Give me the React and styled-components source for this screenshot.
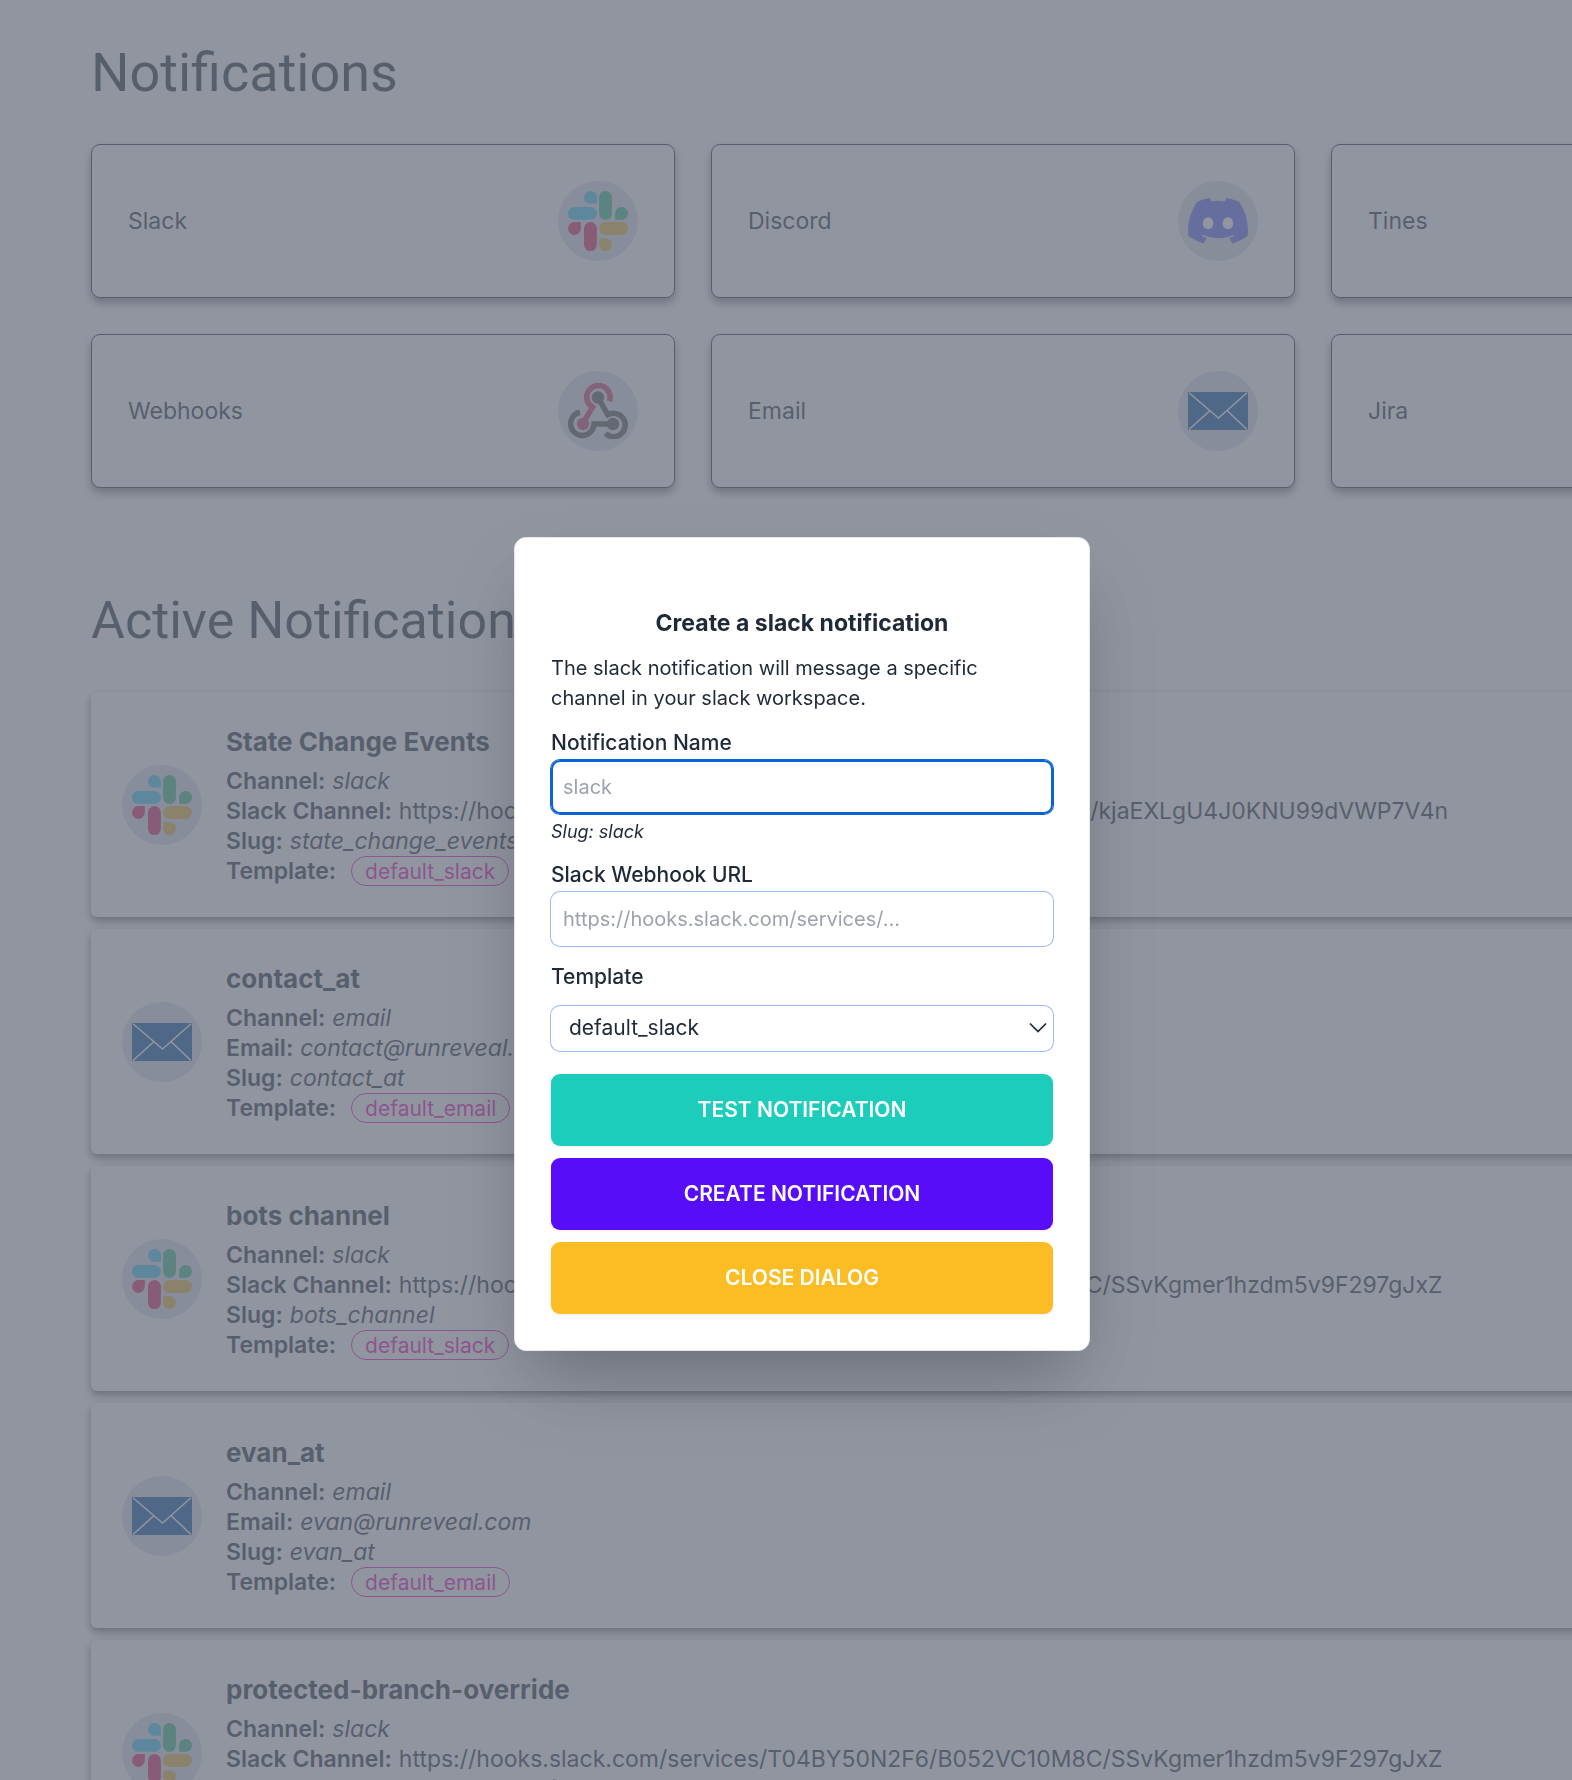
import React from "react"
import styled, { createGlobalStyle } from "styled-components"

const GlobalStyle = createGlobalStyle`
  *,
  *::before,
  *::after {
    box-sizing: border-box;
  }
  body {
    margin: 0;
    background: #ffffff;
    color: #1f2937;
    font-family: Inter, "Liberation Sans", sans-serif;
    font-size: 23px;
    line-height: 30px;
    overflow: hidden;
  }
  h1,
  h2,
  h3,
  p {
    margin: 0;
  }
`

const Page = styled.main`
  height: 100vh;
  overflow: hidden;
  padding: 43px 0 0 91px;
`

const PageTitle = styled.h1`
  font-family: Roboto, sans-serif;
  font-size: ${props => (props.large ? "54px" : "52px")};
  font-weight: 400;
  line-height: 60px;
  margin-bottom: 41px;
`

const ChannelGrid = styled.div`
  display: grid;
  grid-template-columns: repeat(3, minmax(584px, 1fr));
  gap: 36px;
  margin-bottom: 103px;
`

const ChannelCard = styled.button`
  display: flex;
  align-items: center;
  justify-content: space-between;
  padding: 36px;
  border: 1px solid #1f2937;
  border-radius: 9px;
  background: #ffffff;
  color: inherit;
  font: inherit;
  text-align: left;
  box-shadow: 0 5px 8px rgba(0, 0, 0, 0.5);
`

const IconCircle = styled.span`
  display: flex;
  align-items: center;
  justify-content: center;
  flex: none;
  width: 80px;
  height: 80px;
  border-radius: 50%;
  background: ${props => props.shade || "#dddfea"};
`

const NotificationList = styled.div`
  display: flex;
  flex-direction: column;
  gap: 12px;
  min-width: 1822px;
`

const NotificationCard = styled.article`
  display: flex;
  align-items: center;
  gap: 24px;
  padding: 32px 31px 31px;
  border-radius: 6px;
  background: #ffffff;
  box-shadow: 0 4px 9px rgba(0, 0, 0, 0.6);
`

const NotificationName = styled.h3`
  font-size: 26px;
  font-weight: 700;
  line-height: 36px;
  margin-bottom: 6px;
`

const Detail = styled.div`
  display: flex;
  align-items: center;
  gap: 7px;
  height: 30px;
  white-space: nowrap;
`

const DetailLabel = styled.span`
  font-weight: 600;
`

const Badge = styled.span`
  height: 30px;
  margin-left: 8px;
  padding: 0 13px;
  border: 1px solid #f000b8;
  border-radius: 15px;
  color: #f000b8;
  font-size: 21px;
  line-height: 29px;
`

const Overlay = styled.div`
  position: fixed;
  inset: 0;
  display: flex;
  align-items: center;
  justify-content: center;
  padding: 107px 0 0 32px;
  background: rgba(107, 114, 128, 0.75);
`

const Dialog = styled.form`
  width: 100%;
  max-width: 576px;
  padding: 67px 36px 36px;
  border: 1px solid #e5e7eb;
  border-radius: 12px;
  background: #ffffff;
  font-size: 20px;
  box-shadow: 0 36px 72px -16px rgba(0, 0, 0, 0.28);
`

const DialogTitle = styled.h2`
  font-size: 23px;
  font-weight: 700;
  line-height: 36px;
  margin-bottom: 12px;
  text-align: center;
`

const Field = styled.div`
  display: flex;
  flex-direction: column;
  margin-top: 16px;
  p + & {
    margin-top: 15px;
  }
`

const Label = styled.label`
  font-size: 21px;
  font-weight: 500;
  line-height: 30px;
  margin-bottom: ${props => (props.loose ? "14px" : "2px")};
`

const controlRing = `
  border: 0;
  border-radius: 9px;
  background: #ffffff;
  color: #1f2937;
  font: inherit;
  box-shadow: 0 0 0 1px #98bbfb;
  outline: 0;
`

const TextInput = styled.input`
  ${controlRing}
  width: 100%;
  height: 54px;
  padding: 0 12px;
  &::placeholder {
    color: #9ca3af;
    opacity: 1;
  }
  &:focus {
    box-shadow: 0 0 0 1px #0b62d6, inset 0 0 0 2px #0b62d6;
    caret-color: transparent;
  }
`

const Hint = styled.em`
  font-size: 18px;
  line-height: 24px;
  margin-top: 6px;
`

const SelectWrapper = styled.div`
  display: grid;
  align-items: center;
  svg {
    grid-area: 1 / 1;
    justify-self: end;
    margin-right: 6px;
    pointer-events: none;
  }
`

const Select = styled.select`
  ${controlRing}
  grid-area: 1 / 1;
  width: 100%;
  height: 45px;
  padding: 0 36px 0 18px;
  font-size: 21px;
  appearance: none;
`

const Actions = styled.div`
  display: flex;
  flex-direction: column;
  gap: 12px;
  margin-top: 23px;
`

const ActionButton = styled.button`
  height: 72px;
  border: 0;
  border-radius: 9px;
  background: ${props => props.color};
  color: #ffffff;
  font: inherit;
  font-size: 21px;
  font-weight: 600;
  text-transform: uppercase;
  box-shadow: 0 1px 3px rgba(0, 0, 0, 0.08);
`

const SlackIcon = () => (
  <svg width="60" height="60" viewBox="0 0 60 60" aria-hidden="true">
    <g fill="#36c5f0">
      <path d="M22.5 0a6.4 6.4 0 0 0 0 12.8h6.4V6.4A6.4 6.4 0 0 0 22.5 0z" />
      <rect x="0" y="16" width="28.9" height="12.8" rx="6.4" />
    </g>
    <g fill="#2eb67d">
      <rect x="31.1" y="0" width="12.8" height="28.8" rx="6.4" />
      <path d="M60 22.4a6.4 6.4 0 0 0-12.8 0v6.4h6.4a6.4 6.4 0 0 0 6.4-6.4z" />
    </g>
    <g fill="#ecb22e">
      <rect x="31.1" y="31.1" width="28.9" height="12.8" rx="6.4" />
      <path d="M37.5 60a6.4 6.4 0 0 0 0-12.8h-6.4v6.4a6.4 6.4 0 0 0 6.4 6.4z" />
    </g>
    <g fill="#e01e5a">
      <rect x="16" y="31.1" width="12.9" height="28.9" rx="6.4" />
      <path d="M0 37.5a6.4 6.4 0 0 0 12.8 0v-6.4H6.4A6.4 6.4 0 0 0 0 37.5z" />
    </g>
  </svg>
)

const DiscordIcon = () => (
  <svg width="60" height="46" viewBox="0 0 60 46" aria-hidden="true">
    <path
      fill="#5865f2"
      d="M50.8 3.8A49.5 49.5 0 0 0 38.6 0a.2.2 0 0 0-.2.1c-.5.9-1.1 2.2-1.5 3.1a45.7 45.7 0 0 0-13.7 0C22.8 2.3 22.2 1 21.6.1a.2.2 0 0 0-.2-.1A49.4 49.4 0 0 0 9.2 3.8C1.4 15.3-.7 26.6.3 37.7c0 .1 0 .1.1.2a49.8 49.8 0 0 0 15 7.5c.1 0 .2 0 .2-.1 1.2-1.6 2.2-3.2 3.1-5 0-.1 0-.2-.1-.3a32.8 32.8 0 0 1-4.7-2.2c-.1-.1-.1-.3 0-.4l.9-.7c11 4.600 21.500 4.600 30.400 0l.9.7c.2.1.1.3 0 .4-1.5.9-3 1.6-4.7 2.2-.1.1-.2.2-.1.3.9 1.8 1.9 3.4 3.1 5 0 .1.1.1.2.1a49.600 49.600 0 0 0 15-7.5c.1-.1.1-.1.1-.2 1.200-12.900-2.100-24.100-8.900-33.900z"
    />
    <ellipse cx="20.1" cy="25.2" rx="5.3" ry="6" fill="#ffffff" />
    <ellipse cx="39.9" cy="25.2" rx="5.3" ry="6" fill="#ffffff" />
  </svg>
)

const WebhookIcon = () => (
  <svg width="60" height="56" viewBox="0 0 60 56" fill="none" aria-hidden="true">
    <g strokeWidth="5.5">
      <path stroke="#c73a63" d="M41.4 18.2A11.7 11.7 0 1 0 24.5 24.2L15 40" />
      <path stroke="#4b4b4b" d="M11.9 29.3A11.7 11.7 0 1 0 26 41H45" />
      <path stroke="#4b4b4b" d="M30 14.5L39.8 31.8A11.7 11.7 0 1 1 37.5 50.5" />
    </g>
    <circle cx="30" cy="14.5" r="6.2" fill="#4b4b4b" />
    <circle cx="15" cy="41" r="6.2" fill="#c73a63" />
    <circle cx="45" cy="41" r="6.2" fill="#4b4b4b" />
  </svg>
)

const EmailIcon = () => (
  <svg width="60" height="38" viewBox="0 0 60 38" aria-hidden="true">
    <path fill="#004ea0" d="M0 0h60v38H0z" />
    <path
      fill="none"
      stroke="#ffffff"
      strokeWidth="1.5"
      d="M1 .8L30.5 26 59 .8M1 37.5L21.5 19M59 37.5L39.5 19"
    />
  </svg>
)

const icons = {
  slack: SlackIcon,
  discord: DiscordIcon,
  webhooks: WebhookIcon,
  email: EmailIcon,
}

const channels = [
  { name: "Slack", icon: "slack" },
  { name: "Discord", icon: "discord", shade: "#d9dde3" },
  { name: "Tines" },
  { name: "Webhooks", icon: "webhooks" },
  { name: "Email", icon: "email" },
  { name: "Jira" },
]

const hooksUrl = "https://hooks.slack.com/services/T04BY50N2F6"

const notifications = [
  {
    name: "State Change Events",
    channel: "slack",
    target: `${hooksUrl}/B051VC10J8C/kjaEXLgU4J0KNU99dVWP7V4n`,
    slug: "state_change_events",
  },
  {
    name: "contact_at",
    channel: "email",
    target: "contact@runreveal.com",
    slug: "contact_at",
  },
  {
    name: "bots channel",
    channel: "slack",
    target: `${hooksUrl}/B052VC10M8C/SSvKgmer1hzdm5v9F297gJxZ`,
    slug: "bots_channel",
  },
  {
    name: "evan_at",
    channel: "email",
    target: "evan@runreveal.com",
    slug: "evan_at",
  },
  {
    name: "protected-branch-override",
    channel: "slack",
    target: `${hooksUrl}/B052VC10M8C/SSvKgmer1hzdm5v9F297gJxZ`,
    slug: "protected-branch-override",
  },
]

const ChannelIcon = ({ icon, shade }) => {
  const Icon = icons[icon]
  return <IconCircle shade={shade}>{Icon && <Icon />}</IconCircle>
}

const Notification = ({ name, channel, target, slug }) => (
  <NotificationCard>
    <ChannelIcon icon={channel} />
    <div>
      <NotificationName>{name}</NotificationName>
      <Detail>
        <DetailLabel>Channel:</DetailLabel>
        <em>{channel}</em>
      </Detail>
      <Detail>
        <DetailLabel>
          {channel === "slack" ? "Slack Channel:" : "Email:"}
        </DetailLabel>
        {channel === "slack" ? <span>{target}</span> : <em>{target}</em>}
      </Detail>
      <Detail>
        <DetailLabel>Slug:</DetailLabel>
        <em>{slug}</em>
      </Detail>
      <Detail>
        <DetailLabel>Template:</DetailLabel>
        <Badge>default_{channel}</Badge>
      </Detail>
    </div>
  </NotificationCard>
)

const CreateDialog = () => (
  <Overlay>
    <Dialog
      role="dialog"
      aria-labelledby="dialog-title"
      onSubmit={e => e.preventDefault()}
    >
      <DialogTitle id="dialog-title">Create a slack notification</DialogTitle>
      <p>
        The slack notification will message a specific channel in your slack
        workspace.
      </p>
      <Field>
        <Label htmlFor="name">Notification Name</Label>
        <TextInput id="name" placeholder="slack" autoFocus />
        <Hint>Slug: slack</Hint>
      </Field>
      <Field>
        <Label htmlFor="url">Slack Webhook URL</Label>
        <TextInput id="url" placeholder="https://hooks.slack.com/services/..." />
      </Field>
      <Field>
        <Label htmlFor="template" loose>
          Template
        </Label>
        <SelectWrapper>
          <Select id="template" defaultValue="default_slack">
            <option value="default_slack">default_slack</option>
          </Select>
          <svg width="18" height="12" viewBox="0 0 18 12" fill="none">
            <path d="M1 1.5l8 8 8-8" stroke="#1f2937" strokeWidth="1.7" />
          </svg>
        </SelectWrapper>
      </Field>
      <Actions>
        <ActionButton type="button" color="#1dcdbc">
          Test notification
        </ActionButton>
        <ActionButton type="submit" color="#570df8">
          Create notification
        </ActionButton>
        <ActionButton type="button" color="#fbbd23">
          Close dialog
        </ActionButton>
      </Actions>
    </Dialog>
  </Overlay>
)

const App = () => (
  <>
    <GlobalStyle />
    <Page>
      <PageTitle large>Notifications</PageTitle>
      <ChannelGrid>
        {channels.map(({ name, icon, shade }) => (
          <ChannelCard key={name} type="button">
            {name}
            <ChannelIcon icon={icon} shade={shade} />
          </ChannelCard>
        ))}
      </ChannelGrid>
      <PageTitle as="h2">Active Notifications</PageTitle>
      <NotificationList>
        {notifications.map(item => (
          <Notification key={item.name} {...item} />
        ))}
      </NotificationList>
    </Page>
    <CreateDialog />
  </>
)

export default App
